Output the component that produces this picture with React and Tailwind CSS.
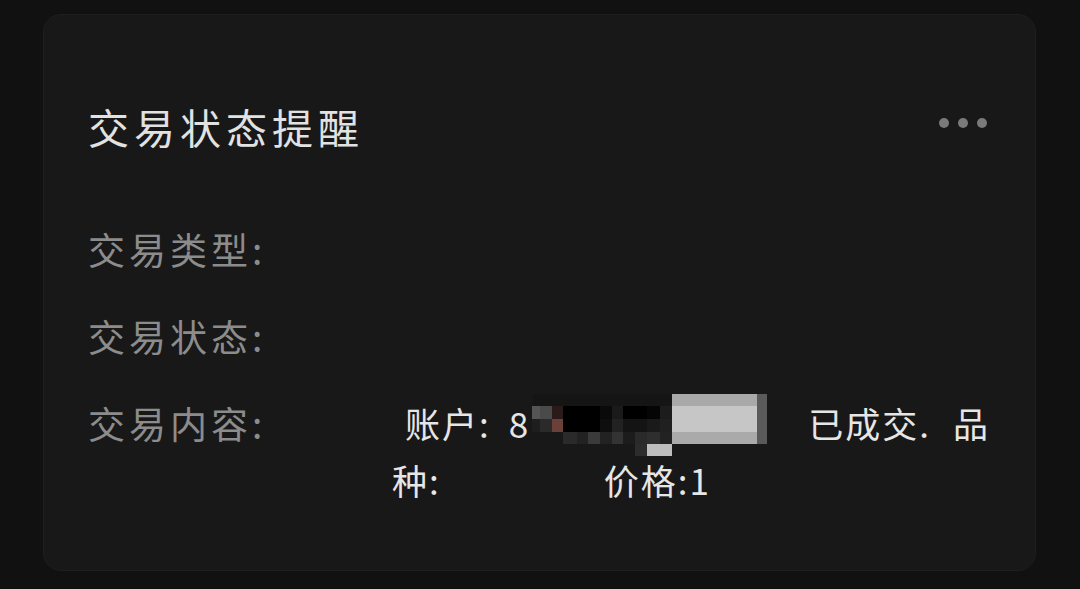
import React from 'react';

const font = "font-['Noto_Sans_CJK_SC','Noto_Sans',sans-serif]";

// censor mosaic over the account number
const cells = [
  // row A
  [3, 0, 139, 12, '#151515'],
  [142, 0, 85, 12, '#a9a9a9'],
  [227, 0, 10, 12, '#5a5a5a'],
  // row B1
  [2, 12, 8, 13, '#555555'],
  [10, 12, 12, 13, '#4a4a4a'],
  [22, 12, 11, 13, '#2a1a1a'],
  [33, 12, 37, 13, '#000000'],
  [70, 12, 12, 13, '#0a0a0a'],
  [82, 12, 11, 13, '#1a1a1a'],
  [93, 12, 24, 13, '#000000'],
  [117, 12, 13, 13, '#050505'],
  [130, 12, 12, 13, '#1c1c1c'],
  [142, 12, 85, 26, '#c6c6c6'],
  [227, 12, 10, 38, '#5a5a5a'],
  // row B2
  [2, 25, 8, 13, '#1e1e1e'],
  [10, 25, 12, 13, '#2a2a2a'],
  [22, 25, 11, 13, '#6b4038'],
  [33, 25, 37, 13, '#000000'],
  [70, 25, 12, 13, '#0e0e0e'],
  [82, 25, 11, 13, '#222222'],
  [93, 25, 24, 13, '#141414'],
  [117, 25, 13, 13, '#1a1a1a'],
  [130, 25, 12, 13, '#202020'],
  // row C
  [33, 38, 14, 12, '#2a2a2a'],
  [47, 38, 11, 12, '#222222'],
  [58, 38, 12, 12, '#3a3a3a'],
  [70, 38, 12, 12, '#222222'],
  [82, 38, 11, 12, '#333333'],
  [93, 38, 12, 12, '#1c1c1c'],
  [105, 38, 12, 12, '#2a2a2a'],
  [117, 38, 13, 12, '#2e2e2e'],
  [130, 38, 12, 12, '#222222'],
  [142, 38, 85, 12, '#aaaaaa'],
  // row D
  [105, 50, 12, 12, '#2c2c2c'],
  [117, 50, 25, 12, '#bdbdbd'],
];

const Mosaic = () => (
  <svg width="238" height="62" viewBox="0 0 238 62" className="shrink-0 self-start -mt-px">
    {cells.map(([x, y, w, h, c], i) => (
      <rect key={i} x={x} y={y} width={w} height={h} fill={c} />
    ))}
  </svg>
);

const Row = ({ label, children }) => (
  <div className="flex items-start">
    <div className="w-[304px] shrink-0 text-[37px] leading-[57px] tracking-[4px] text-[#8c8c8c]">
      {label}
    </div>
    <div className="flex-1 min-w-0">{children}</div>
  </div>
);

export default function App() {
  return (
    <div className={`min-h-screen w-[1080px] bg-[#111111] pt-[14px] pl-[43px] ${font}`}>
      <div className="w-[993px] h-[557px] rounded-[18px] border border-[#1e1e1e] bg-[#181818] pl-[44px] pr-[40px] pt-[81px]">
        {/* Header */}
        <div className="flex items-center justify-between h-[60px] pr-[8px]">
          <h2 className="text-[41px] leading-[60px] tracking-[5px] text-[#e2e2e2]">交易状态提醒</h2>
          <div className="flex items-center gap-[9px] -mt-[6px]">
            <span className="w-[10px] h-[10px] rounded-full bg-[#7a7a7a]" />
            <span className="w-[10px] h-[10px] rounded-full bg-[#7a7a7a]" />
            <span className="w-[10px] h-[10px] rounded-full bg-[#7a7a7a]" />
          </div>
        </div>

        {/* Details */}
        <div className="mt-[65px] flex flex-col gap-[30px]">
          <Row label="交易类型:" />
          <Row label="交易状态:" />
          <Row label="交易内容:">
            <div className="text-[35px] text-[#e6e6e6] tracking-[2px] whitespace-nowrap">
              <div className="flex h-[57px] items-center">
                <span className="shrink-0 ml-[13px]">账户:</span>
                <span className="shrink-0 ml-[18px]">8</span>
                <Mosaic />
                <span className="shrink-0 ml-[40px]">已成交.</span>
                <span className="shrink-0 ml-[22px]">品</span>
              </div>
              <div className="flex h-[57px] items-center">
                <span className="shrink-0">种:</span>
                <span className="shrink-0 ml-[163px]">价格:1</span>
              </div>
            </div>
          </Row>
        </div>
      </div>
    </div>
  );
}
